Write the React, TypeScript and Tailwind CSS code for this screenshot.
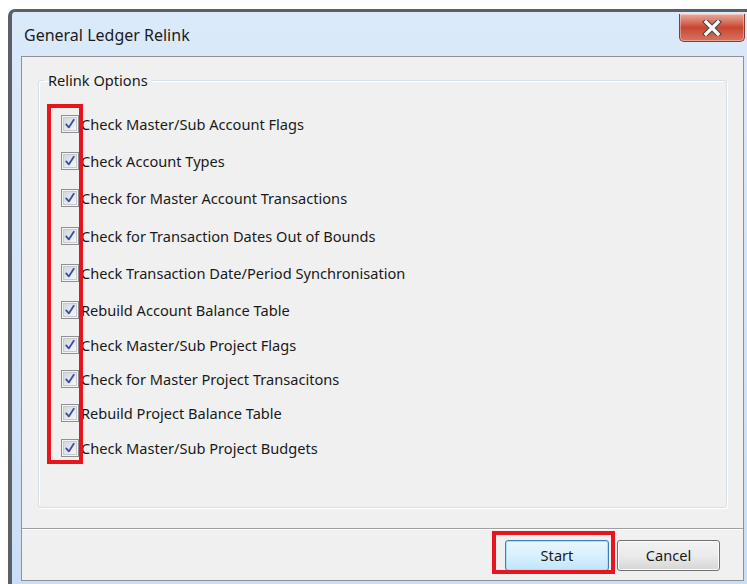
import React from "react";

// Relink options shown in the group box, top to bottom
const options = [
  { label: "Check Master/Sub Account Flags", gap: "mt-[26px]" },
  { label: "Check Account Types", gap: "mt-[19px]" },
  { label: "Check for Master Account Transactions", gap: "mt-[19px]" },
  { label: "Check for Transaction Dates Out of Bounds", gap: "mt-[20px]" },
  { label: "Check Transaction Date/Period Synchronisation", gap: "mt-[19px]" },
  { label: "Rebuild Account Balance Table", gap: "mt-[19px]" },
  { label: "Check Master/Sub Project Flags", gap: "mt-[17px]" },
  { label: "Check for Master Project Transacitons", gap: "mt-[16px]" },
  { label: "Rebuild Project Balance Table", gap: "mt-[16px]" },
  { label: "Check Master/Sub Project Budgets", gap: "mt-[17px]" },
];

function CheckBox() {
  return (
    <span className="flex h-[18px] w-[18px] shrink-0 items-center justify-center border border-[#8f8f8f] bg-[#f4f4f4]">
      <span className="flex h-[14px] w-[14px] items-center justify-center border border-[#c6c9cf] bg-gradient-to-br from-[#d3d6dc] to-[#f5f6f8]">
        <svg width="12" height="12" viewBox="0 0 12 12">
          <path
            d="M2.2 6.4 L4.8 9.4 L9.8 1.8"
            fill="none"
            stroke="#3b4fa0"
            strokeWidth="1.8"
            strokeLinecap="round"
            strokeLinejoin="round"
          />
        </svg>
      </span>
    </span>
  );
}

function CloseButton() {
  return (
    <div className="flex h-[28px] w-[66px] items-center justify-center rounded-b-[5px] border border-t-0 border-[#8a3a30] bg-gradient-to-b from-[#e7a99d] via-[#c9452f] to-[#d6745f] shadow-[inset_0_0_0_1px_rgba(255,255,255,0.35)]">
      <svg width="22" height="16" viewBox="0 0 22 16">
        <path
          d="M5 2 L17 14 M17 2 L5 14"
          stroke="#4a4a4a"
          strokeWidth="5.5"
          strokeLinecap="square"
        />
        <path
          d="M5 2 L17 14 M17 2 L5 14"
          stroke="#ffffff"
          strokeWidth="3.2"
          strokeLinecap="square"
        />
      </svg>
    </div>
  );
}

function DialogButton({
  children,
  focused,
}: {
  children: React.ReactNode;
  focused?: boolean;
}) {
  return (
    <button
      className={
        focused
          ? "h-[31px] w-[104px] rounded-[3px] border border-[#3c7fb1] bg-gradient-to-b from-[#eaf6fd] via-[#d9f0fc] to-[#bee6fd] text-[14.6px] text-[#1a1a1a] shadow-[inset_0_0_0_1px_#a6e0fb]"
          : "h-[31px] w-[103px] rounded-[3px] border border-[#707070] bg-gradient-to-b from-[#f2f2f2] via-[#ebebeb] to-[#d5d5d5] text-[14.6px] text-[#1a1a1a] shadow-[inset_0_0_0_1px_#fcfcfc]"
      }
    >
      {children}
    </button>
  );
}

export default function App() {
  return (
    <div
      className="h-[584px] w-[747px] overflow-hidden bg-white pl-[8px] pt-[9px]"
      style={{ fontFamily: '"Noto Sans", "Open Sans", sans-serif' }}
    >
      {/* window frame */}
      <div className="h-[600px] w-[760px] rounded-tl-[7px] border-l-[4px] border-t-[3px] border-[#5c5f63] bg-gradient-to-b from-[#dbeafa] to-[#c9def5] pl-[9px]">
        {/* title bar */}
        <div className="flex h-[44px] w-[723px] items-start justify-between">
          <span className="mt-[11px] pl-[3px] text-[16px] text-[#1b1b1b]">
            General Ledger Relink
          </span>
          <div className="-mr-[1px] mt-[2px]">
            <CloseButton />
          </div>
        </div>

        {/* client area */}
        <div className="flex h-[525px] w-[723px] flex-col border border-[#8e9195] bg-[#f0f0f0]">
          <div className="relative h-[471px] px-[16px] pt-[14px]">
            <fieldset className="h-[437px] rounded-[3px] border border-[#d5dfe5] shadow-[inset_1px_1px_0_#ffffff,1px_1px_0_#ffffff]">
              <legend className="ml-[5px] px-[4px] text-[14.6px] leading-[18px] text-[#1a1a1a]">
                Relink Options
              </legend>
              <div className="flex flex-col pl-[22px]">
                {options.map((o) => (
                  <label
                    key={o.label}
                    className={`flex h-[18px] items-center gap-[3px] text-[14.6px] leading-none text-[#1a1a1a] ${o.gap}`}
                  >
                    <CheckBox />
                    <span className="-ml-[1px]">{o.label}</span>
                  </label>
                ))}
              </div>
            </fieldset>
            {/* highlight around the checkbox column */}
            <div className="absolute left-[25px] top-[47px] h-[360px] w-[36px] border-[4px] border-[#e8141e]" />
          </div>

          {/* button strip */}
          <div className="relative flex flex-1 items-start justify-end gap-[8px] border-t border-[#a0a0a0] pr-[23px] pt-[11px] shadow-[inset_0_1px_0_#ffffff]">
            <DialogButton focused>Start</DialogButton>
            <DialogButton>Cancel</DialogButton>
            <div className="absolute left-[470px] top-[2px] h-[43px] w-[123px] border-[4px] border-[#e8141e]" />
          </div>
        </div>
      </div>
    </div>
  );
}
